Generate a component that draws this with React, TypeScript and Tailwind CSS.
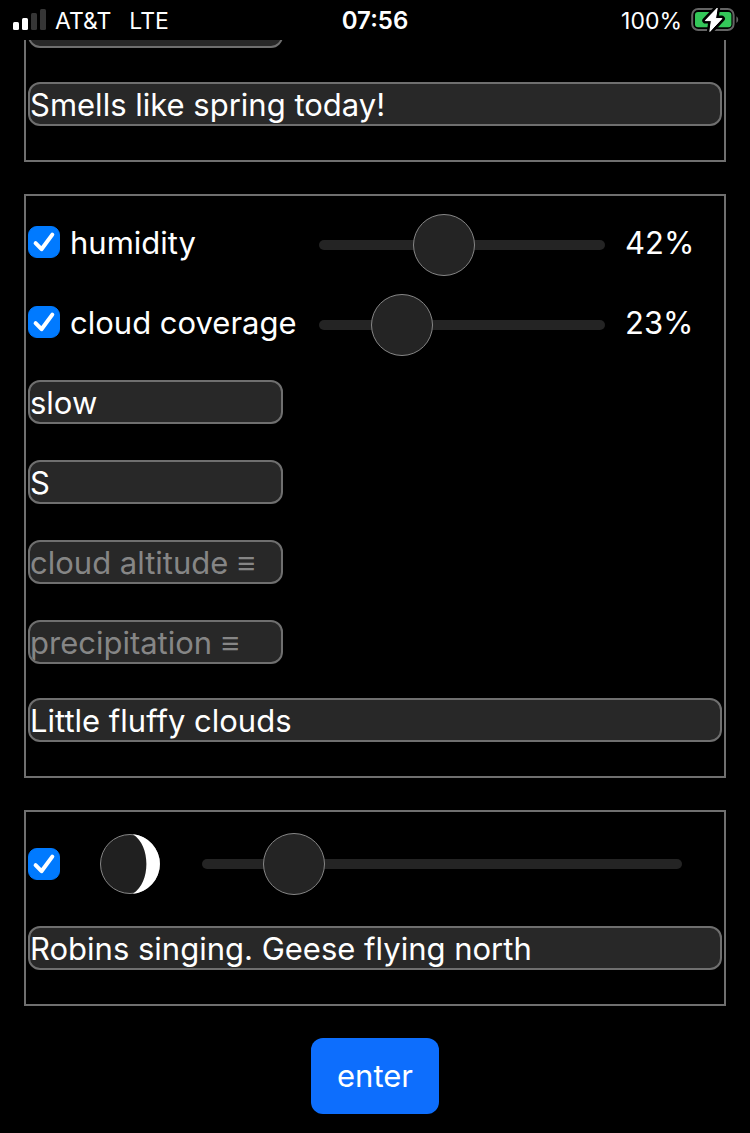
import { useState } from "react";

const fieldClass =
  "block h-11 rounded-xl border-2 border-[#6f6f6f] bg-[#282828] px-0 text-[31px] leading-10 text-white placeholder:text-[#868686] focus:outline-none";

function TextField({ label, value, placeholder, wide }: { label: string; value?: string; placeholder?: string; wide?: boolean }) {
  return (
    <input
      type="text"
      aria-label={label}
      defaultValue={value}
      placeholder={placeholder}
      className={`${fieldClass} ${wide ? "w-full" : "w-[255px]"}`}
    />
  );
}

function CheckBox({ id, label }: { id: string; label?: string }) {
  return (
    <span className="grid size-8 shrink-0">
      <input
        id={id}
        type="checkbox"
        defaultChecked
        aria-label={label}
        className="peer col-start-1 row-start-1 size-8 appearance-none rounded-[9px] border border-[#6f6f6f] bg-[#282828] checked:border-[#007aff] checked:bg-[#007aff]"
      />
      <svg
        viewBox="0 0 32 32"
        aria-hidden="true"
        className="pointer-events-none invisible col-start-1 row-start-1 size-8 peer-checked:visible"
      >
        <path d="M7.6 17.2 13.5 23.2 24.3 8.6" fill="none" stroke="#fff" strokeWidth="4" strokeLinecap="round" strokeLinejoin="round" />
      </svg>
    </span>
  );
}

function Slider({ label, value, onChange }: { label: string; value: number; onChange: (v: number) => void }) {
  return (
    <input
      type="range"
      aria-label={label}
      min={0}
      max={100}
      step="any"
      value={value}
      onChange={(e) => onChange(Number(e.target.value))}
      className="h-[62px] min-w-0 flex-1 appearance-none bg-transparent [&::-webkit-slider-runnable-track]:h-[10px] [&::-webkit-slider-runnable-track]:rounded-full [&::-webkit-slider-runnable-track]:bg-[#242424] [&::-webkit-slider-thumb]:-mt-[26px] [&::-webkit-slider-thumb]:size-[62px] [&::-webkit-slider-thumb]:appearance-none [&::-webkit-slider-thumb]:rounded-full [&::-webkit-slider-thumb]:border [&::-webkit-slider-thumb]:border-solid [&::-webkit-slider-thumb]:border-[#868686] [&::-webkit-slider-thumb]:bg-[#242424]"
    />
  );
}

function PercentRow({ id, label, initial }: { id: string; label: string; initial: number }) {
  const [value, setValue] = useState(initial);
  return (
    <div className="flex h-[62px] items-center">
      <div className="flex w-[291px] shrink-0 items-start">
        <CheckBox id={id} />
        <label htmlFor={id} className="pb-1 pl-[10px] leading-[34px]">
          {label}
        </label>
      </div>
      <Slider label={label} value={value} onChange={setValue} />
      <output className="w-[117px] shrink-0 pb-1 pl-5 leading-[34px]">{Math.round(value)}%</output>
    </div>
  );
}

function MoonRow() {
  const [phase, setPhase] = useState(14.6);
  return (
    <div className="flex h-16 items-center pr-10">
      <CheckBox id="moon" label="moon phase" />
      <svg viewBox="0 0 60 60" aria-hidden="true" className="mr-[42px] ml-10 size-[60px] shrink-0">
        <circle cx="30" cy="30" r="29.5" fill="#202020" stroke="#868686" strokeWidth="1" />
        <path d="M33 .25A29.9 29.9 0 0 1 33 59.75C42 54 46.4 42 46.4 30S42 6 33 .25Z" fill="#fff" />
      </svg>
      <Slider label="moon phase" value={phase} onChange={setPhase} />
    </div>
  );
}

function StatusBar() {
  return (
    <header className="grid h-10 grid-cols-[1fr_auto_1fr] items-center text-[23px] leading-none">
      <div className="flex items-center pl-3">
        <svg viewBox="0 0 36 24" aria-hidden="true" className="h-6 w-9">
          <rect x="1" y="14" width="6" height="8" rx="1.5" fill="#fff" />
          <rect x="10" y="10" width="6" height="12" rx="1.5" fill="#fff" />
          <rect x="19" y="5" width="6" height="17" rx="1.5" fill="#363636" />
          <rect x="28" y="1" width="6" height="21" rx="1.5" fill="#363636" />
        </svg>
        <span className="pt-0.5 pl-[7px]">AT&amp;T</span>
        <span className="pt-0.5 pl-[18px]">LTE</span>
      </div>
      <time className="pt-0.5 text-[24px] font-semibold">07:56</time>
      <div className="flex items-center justify-end gap-[6px] pr-[10px]">
        <span className="pt-0.5">100%</span>
        <svg viewBox="0 0 52 32" aria-hidden="true" className="h-8 w-[52px]">
          <rect x="4.2" y="5" width="41.4" height="21" rx="6" fill="none" stroke="#646464" strokeWidth="2" />
          <path d="M48.4 12.2c2.4 1.6 2.4 5.2 0 6.8Z" fill="#646464" />
          <rect x="7" y="8" width="36.4" height="15.2" rx="3" fill="#34c759" />
          <path
            d="M29.2 4.2 17.3 16.6h6.1L21.9 27.4 33.9 14.6h-6.4Z"
            fill="#fff"
            stroke="#000"
            strokeWidth="6"
            strokeLinejoin="round"
            paintOrder="stroke"
          />
          <path d="M29.2 4.2 17.3 16.6h6.1L21.9 27.4 33.9 14.6h-6.4Z" fill="#fff" stroke="#fff" strokeWidth="1" strokeLinejoin="round" />
        </svg>
      </div>
    </header>
  );
}

export default function App() {
  return (
    <div className="min-h-screen bg-black font-[Inter,'Liberation_Sans',sans-serif] text-white">
      <StatusBar />
      <form className="flex flex-col gap-8 px-6 pb-5 text-[31px]" onSubmit={(e) => e.preventDefault()}>
        <section className="border-2 border-t-0 border-[#6f6f6f] px-0.5 pb-[34px]">
          <div className="mb-[34px] flex h-2 items-end overflow-hidden">
            <TextField label="weather" />
          </div>
          <TextField label="notes on scent" value="Smells like spring today!" wide />
        </section>

        <section className="border-2 border-[#6f6f6f] px-0.5 pt-[18px] pb-[34px]">
          <div className="flex flex-col gap-[18px]">
            <PercentRow id="humidity" label="humidity" initial={42} />
            <PercentRow id="cloud-coverage" label="cloud coverage" initial={23} />
          </div>
          <div className="flex flex-col gap-9 pt-6 pb-[34px]">
            <TextField label="cloud speed" value="slow" />
            <TextField label="cloud direction" value="S" />
            <TextField label="cloud altitude" placeholder="cloud altitude ≡" />
            <TextField label="precipitation" placeholder="precipitation ≡" />
          </div>
          <TextField label="notes on clouds" value="Little fluffy clouds" wide />
        </section>

        <section className="border-2 border-[#6f6f6f] px-0.5 pt-5 pb-[34px]">
          <MoonRow />
          <div className="pt-[30px]">
            <TextField label="notes on nature" value="Robins singing. Geese flying north" wide />
          </div>
        </section>

        <button type="submit" className="h-[76px] self-center rounded-xl bg-[#0d6efd] px-[26px] leading-10">
          enter
        </button>
      </form>
    </div>
  );
}
